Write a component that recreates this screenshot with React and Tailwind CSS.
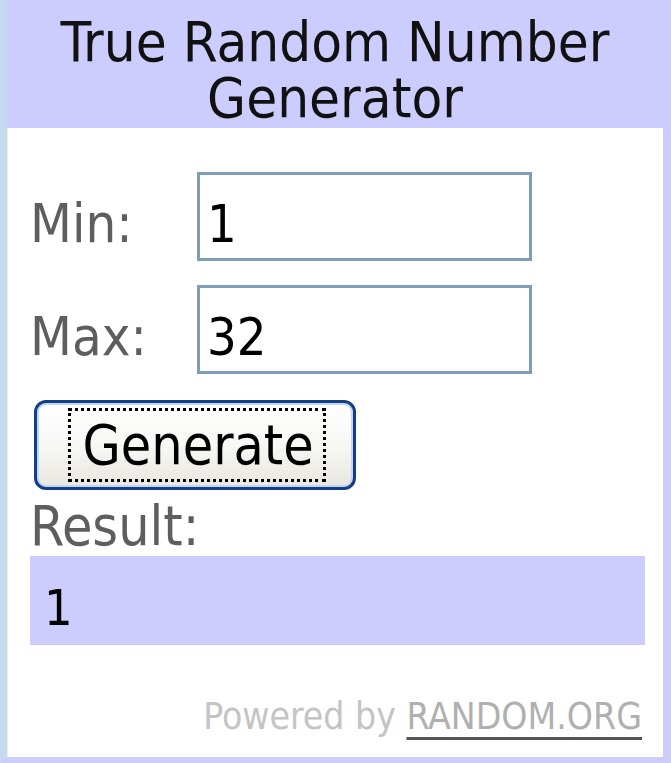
import { useState } from "react";

const font = { fontFamily: '"DejaVu Sans Condensed", "DejaVu Sans", sans-serif' };

export default function App() {
  const [min, setMin] = useState("1");
  const [max, setMax] = useState("32");
  const [result, setResult] = useState("1");

  const generate = () => {
    const lo = parseInt(min, 10) || 0;
    const hi = parseInt(max, 10) || 0;
    setResult(String(lo + Math.floor(Math.random() * (hi - lo + 1))));
  };

  return (
    <div
      style={font}
      className="w-[671px] h-[763px] bg-[#ccccff] border-l-[7px] border-l-[#c4daf1] border-r-[8px] border-r-[#ccccff] border-b-[6px] border-b-[#ccccff] flex flex-col overflow-hidden"
    >
      {/* header */}
      <div className="h-[128px] pt-[14px] text-center text-[56px] leading-[56px] text-[#111]">
        <div>True Random Number</div>
        <div>Generator</div>
      </div>

      {/* body */}
      <div className="flex-1 bg-white border-l border-[#f3efd8] pl-[22px] pr-[10px] pt-[44px]">
        <div className="flex flex-col gap-[24px]">
          <div className="flex">
            <label className="w-[167px] h-[89px] pt-[14px] leading-[75px] text-[54px] text-[#5e5e5e]">Min:</label>
            <input
              value={min}
              onChange={(e) => setMin(e.target.value)}
              style={font}
              className="w-[335px] h-[89px] border-[3px] border-[#7f9db9] pl-[7px] pt-[14px] text-[52px] text-black outline-none"
            />
          </div>
          <div className="flex">
            <label className="w-[167px] h-[89px] pt-[14px] leading-[75px] text-[54px] text-[#5e5e5e]">Max:</label>
            <input
              value={max}
              onChange={(e) => setMax(e.target.value)}
              style={font}
              className="w-[335px] h-[89px] border-[3px] border-[#7f9db9] pl-[7px] pt-[14px] text-[52px] text-black outline-none"
            />
          </div>
        </div>

        <button
          onClick={generate}
          style={font}
          className="mt-[26px] ml-[4px] w-[322px] h-[90px] rounded-[12px] border-[3px] border-[#123f86] bg-gradient-to-b from-[#ffffff] via-[#f7f7f4] to-[#e8e7e0] shadow-[inset_0_0_0_2px_#c2d6f4] flex items-center justify-center"
        >
          <span className="border-[3px] border-dotted border-black h-[74px] w-[258px] ml-[3px] flex items-center pl-[12px] text-[55px] leading-none text-black">
            Generate
          </span>
        </button>

        <div className="mt-[8px] text-[55px] leading-[56px] text-[#5e5e5e]">Result:</div>

        <div className="mt-[2px] w-[615px] h-[89px] bg-[#ccccff] pl-[14px] pt-[22px] text-[50px] leading-[60px] text-black">
          {result}
        </div>

        <div className="mt-[50px] pr-[11px] text-right text-[37px] leading-[44px] text-[#c4c4c4]">
          Powered by{" "}
          <span className="text-[#b0b0b0] underline decoration-[#555] decoration-[3px] underline-offset-[8px]">
            RANDOM.ORG
          </span>
        </div>
      </div>
    </div>
  );
}
